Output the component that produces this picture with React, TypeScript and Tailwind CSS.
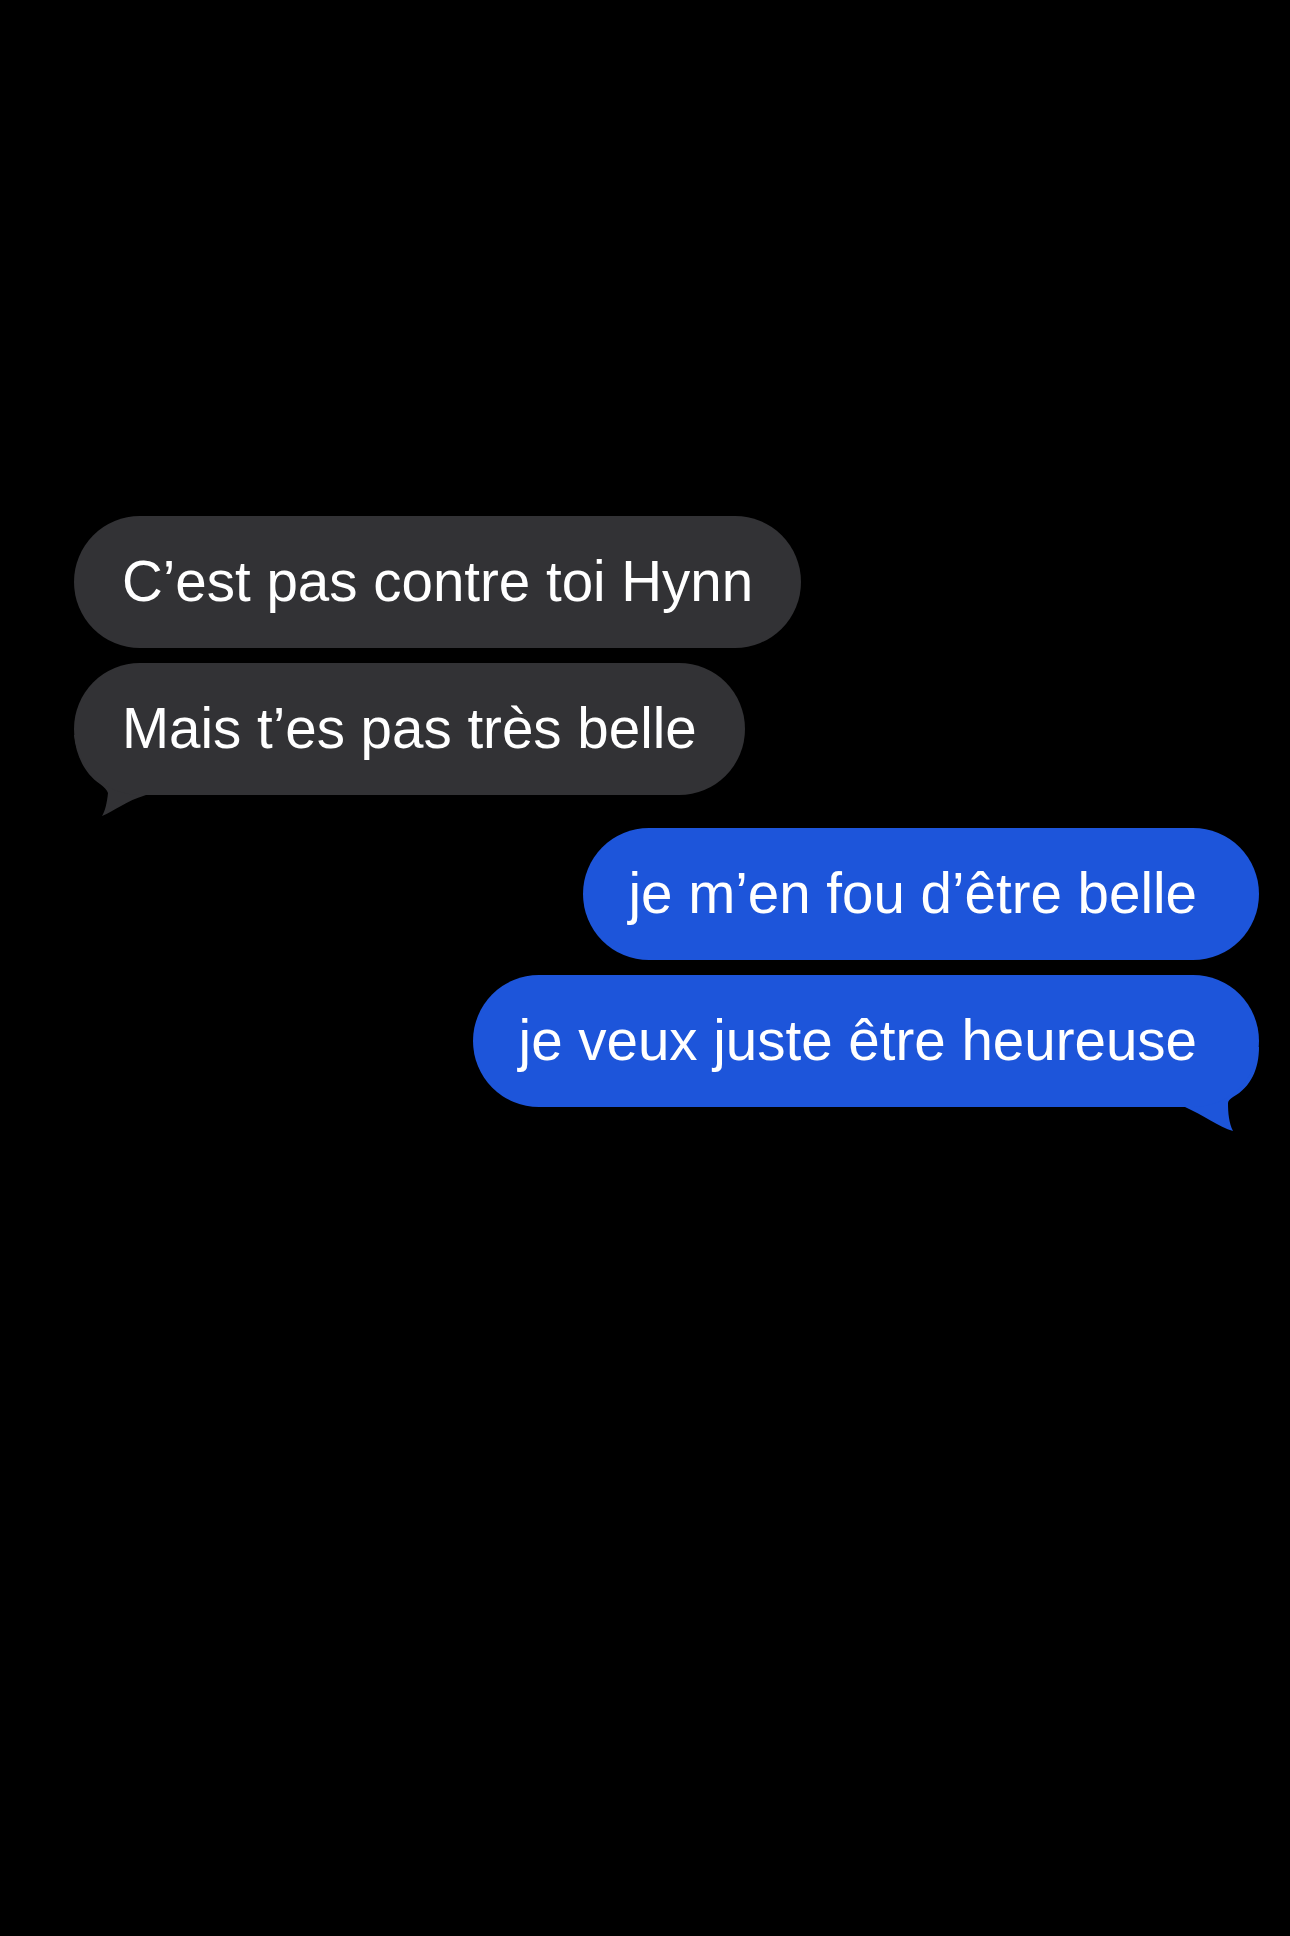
import React from "react";

const font = { fontFamily: '"Liberation Sans", Arial, sans-serif' };

const Bubble = ({ text, blue, tail }: { text: string; blue?: boolean; tail?: boolean }) => {
  const bg = blue ? "bg-[#1d55da]" : "bg-[#323235]";
  const fill = blue ? "#1d55da" : "#323235";
  return (
    <div className={`relative ${blue ? "self-end" : "self-start"}`}>
      {tail && !blue && (
        <svg className="absolute left-0 bottom-[-24px] w-[100px] h-[84px]" viewBox="0 0 100 84">
          <path d="M0 0 C2 20 10 38 26 49 C30 52 33 55 34 58 C33 68 31 76 28 81 C40 76 52 66 72 60 L100 60 L100 0 Z" fill={fill} />
        </svg>
      )}
      {tail && blue && (
        <svg className="absolute right-0 bottom-[-26px] w-[100px] h-[86px]" viewBox="0 0 100 86">
          <path d="M100 0 C100 22 92 40 74 50 C71 52 69 54 69 56 C69 66 70 76 74 84 C60 80 44 68 26 60 L0 60 L0 0 Z" fill={fill} />
        </svg>
      )}
      <div
        className={`${bg} relative h-[132px] rounded-[66px] flex items-center text-white text-[56.5px] leading-none whitespace-nowrap ${
          blue ? "pl-[46px] pr-[62px]" : "pl-[48px] pr-[48px]"
        }`}
      >
        {text}
      </div>
    </div>
  );
};

export default function App() {
  return (
    <div className="w-[1290px] h-[1936px] bg-black overflow-hidden" style={font}>
      <div className="flex flex-col pt-[516px] pl-[74px] pr-[31px]">
        <Bubble text="C’est pas contre toi Hynn" />
        <div className="h-[15px]" />
        <Bubble text="Mais t’es pas très belle" tail />
        <div className="h-[33px]" />
        <Bubble text="je m’en fou d’être belle" blue />
        <div className="h-[15px]" />
        <Bubble text="je veux juste être heureuse" blue tail />
      </div>
    </div>
  );
}
